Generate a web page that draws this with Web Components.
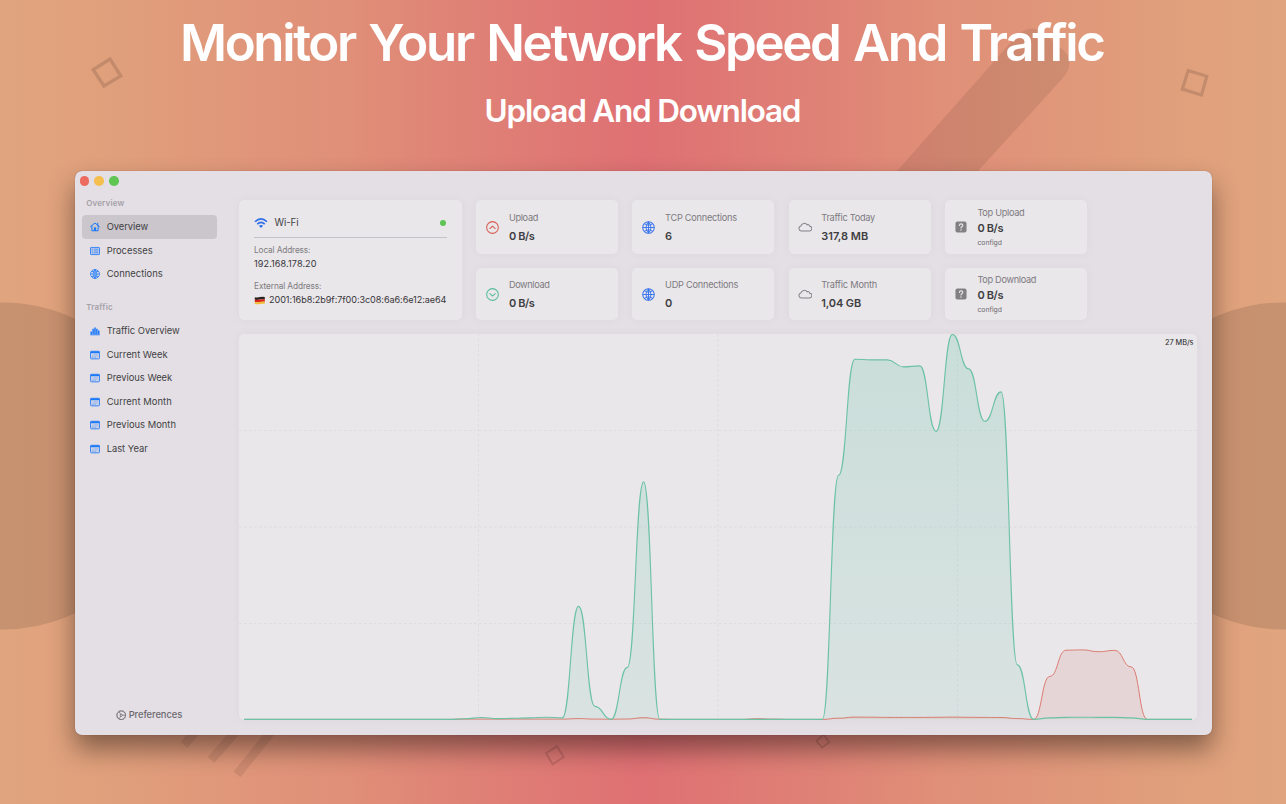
<!DOCTYPE html>
<html lang="en">
<head>
<meta charset="utf-8">
<title>Monitor Your Network Speed And Traffic</title>
<style>
  html, body {
    margin: 0;
    width: 1286px;
    height: 804px;
    overflow: hidden;
    font-family: Inter, "Liberation Sans", sans-serif;
  }
</style>
</head>
<body>
<promo-page>
  <fit-text slot="title" width="926">Monitor Your Network Speed And Traffic</fit-text>
  <fit-text slot="subtitle" width="317">Upload And Download</fit-text>
  <app-window>
    <side-bar slot="sidebar">
      <side-group label="Overview" width="38">
        <side-item icon="house" label="Overview" width="41.5" selected></side-item>
        <side-item icon="list" label="Processes" width="46"></side-item>
        <side-item icon="globe" label="Connections" width="56"></side-item>
      </side-group>
      <side-group label="Traffic" width="26.5">
        <side-item icon="bars" label="Traffic Overview" width="73"></side-item>
        <side-item icon="calendar" label="Current Week" width="61"></side-item>
        <side-item icon="calendar" label="Previous Week" width="65.5"></side-item>
        <side-item icon="calendar" label="Current Month" width="65"></side-item>
        <side-item icon="calendar" label="Previous Month" width="69.3"></side-item>
        <side-item icon="calendar" label="Last Year" width="41"></side-item>
      </side-group>
    </side-bar>
    <wifi-card></wifi-card>
    <stat-card icon="up" label="Upload" lw="29.5" value="0 B/s" vw="26"></stat-card>
    <stat-card icon="globe" label="TCP Connections" lw="72" value="6" vw="7"></stat-card>
    <stat-card icon="cloud" label="Traffic Today" lw="54" value="317,8 MB" vw="47"></stat-card>
    <stat-card icon="unknown" label="Top Upload" lw="47.3" value="0 B/s" vw="26" note="configd"></stat-card>
    <stat-card icon="down" label="Download" lw="41" value="0 B/s" vw="26"></stat-card>
    <stat-card icon="globe" label="UDP Connections" lw="73.3" value="0" vw="7"></stat-card>
    <stat-card icon="cloud" label="Traffic Month" lw="56" value="1,04 GB" vw="40"></stat-card>
    <stat-card icon="unknown" label="Top Download" lw="59" value="0 B/s" vw="26" note="configd"></stat-card>
    <traffic-chart slot="chart"></traffic-chart>
  </app-window>
</promo-page>

<script>
const icons = {
  house: `<path d="M1 7.3 8 1.6l7 5.7M3 6.6V14h10V6.6M12.3 2v3" fill="none" stroke="currentColor" stroke-width="1.6" stroke-linejoin="round" stroke-linecap="round"/><path d="M6.2 14V8.6h3.6V14z" fill="currentColor"/>`,
  list: `<rect x=".8" y="2.3" width="14.4" height="11.4" rx="1" fill="currentColor" fill-opacity=".22" stroke="currentColor" stroke-width="1.3"/><path d="M3 5.2h2M3 8h2M3 10.8h2M6.4 5.2h6.6M6.4 8h6.6M6.4 10.8h6.6" stroke="currentColor" stroke-width="1.2" opacity=".75"/>`,
  globe: `<circle cx="8" cy="8" r="7.1" fill="none" stroke="currentColor" stroke-width="1.3"/><path d="M8 1v14M1 8h14M2.8 3.5Q8 7 13.2 3.5M2.8 12.5Q8 9 13.2 12.5M8 1Q1.8 8 8 15M8 1q6.2 7 0 14" fill="none" stroke="currentColor" stroke-width="1.2"/>`,
  bars: `<path d="M.8 8.6h2.4V13H.8zM3.8 4.3h2.400V13H3.800zM6.800 2.500h2.400V13H6.800zM9.800 4.500h2.400V13H9.800zM12.800 7h2.400v6h-2.400zM.3 13.400h15.400v1.500H.3z" fill="currentColor"/>`,
  calendar: `<rect x=".8" y="2" width="14.4" height="12.2" rx="1.6" fill="currentColor" fill-opacity=".12" stroke="currentColor" stroke-width="1.3"/><path d="M.8 2.200h14.400v2.900H.8z" fill="currentColor"/><path d="M6 7.600h7.200M3 9.900h10.200M3 12.100h7.200" stroke="currentColor" stroke-width="1.100" stroke-dasharray="1.700 .7" opacity=".5"/>`,
  wifi: `<path d="M1.200 6.600Q8-.1 14.800 6.600M3.700 9.200q4.300-4.100 8.600 0" fill="none" stroke="currentColor" stroke-width="1.900"/><path d="M5.600 11.200q2.400-2.100 4.800 0L8 13.700z" fill="currentColor"/>`,
  up: `<circle cx="8" cy="8" r="7.200" fill="none" stroke="currentColor" stroke-width="1.300"/><path d="M4.700 9.300 8 6.300l3.300 3" fill="none" stroke="currentColor" stroke-width="1.300" stroke-linecap="round" stroke-linejoin="round"/>`,
  down: `<circle cx="8" cy="8" r="7.200" fill="none" stroke="currentColor" stroke-width="1.300"/><path d="M4.700 6.900 8 9.900l3.300-3" fill="none" stroke="currentColor" stroke-width="1.300" stroke-linecap="round" stroke-linejoin="round"/>`,
  cloud: `<path d="M3.500 12.500h9.500a2.700 2.700 0 0 0 .3-5.400 1.800 1.800 0 0 0-2.800-1.500A4 4 0 0 0 3.300 6.800 2.900 2.900 0 0 0 3.500 12.500z" fill="none" stroke="currentColor" stroke-width="1.150" stroke-linejoin="round"/>`,
  unknown: `<rect x=".6" y=".6" width="14.800" height="14.800" rx="2.600" fill="currentColor"/><path d="M5.900 6q0-2.200 2.200-2.200T10.300 5.900q0 1-1.200 1.700T8 9.400" fill="none" stroke="#e9e7ea" stroke-width="1.500" stroke-linecap="round"/><circle cx="8" cy="11.900" r="1" fill="#e9e7ea"/>`,
  gear: `<circle cx="8" cy="8" r="6.500" fill="none" stroke="currentColor" stroke-width="1.400"/><path d="M8 8h6.500M8 8 4.700 2.600M8 8l-3.300 5.400" stroke="currentColor" stroke-width="1.100"/><circle cx="8" cy="8" r="1.700" fill="#e5e0e6" stroke="currentColor" stroke-width="1.200"/><circle cx="8" cy="8" r="7.300" fill="none" stroke="currentColor" stroke-width=".8" stroke-dasharray="1.200 1.100"/>`
};

class SvgIcon extends HTMLElement {
  connectedCallback() {
    this.attachShadow({mode: "open"});
    this.shadowRoot.innerHTML = `
      <style>
        :host { display: block; flex: none; width: 10px; height: 10px; }
        svg { display: block; width: 100%; height: 100%; }
      </style>
      <svg viewBox="0 0 16 16">${icons[this.getAttribute("name")]}</svg>
    `;
  }
}

// One line of text, tracked so that it fills the given width
class FitText extends HTMLElement {
  connectedCallback() {
    if(!this.shadowRoot) {
      this.attachShadow({mode: "open"});
      this.shadowRoot.innerHTML = `
        <style>
          :host { display: block; white-space: nowrap; }
          span { display: inline-block; }
        </style>
        <span><slot></slot></span>
      `;
    }
    const span = this.shadowRoot.querySelector("span");
    const width = parseFloat(this.getAttribute("width"));
    const count = this.textContent.length;
    if(width && count > 1) {
      const spacing = (width - span.getBoundingClientRect().width) / (count - 1);
      span.style.letterSpacing = spacing + "px";
      span.style.marginRight = -spacing + "px";
    }
  }
}

class PromoPage extends HTMLElement {
  connectedCallback() {
    this.attachShadow({mode: "open"});
    this.shadowRoot.innerHTML = `
      <style>
        :host {
          display: flex;
          flex-direction: column;
          align-items: center;
          position: relative;
          width: 1286px;
          height: 804px;
          color: #fff;
          background: linear-gradient(90deg, #e0a57e 0, #e0a07c 8%, #e08f78 27%, #df8276 36%, #df7073 50%, #df8276 64%, #e08f78 73%, #e0a07c 92%, #e0a57e 100%);
        }
        .art { position: absolute; inset: 0; }
        header, .body { position: relative; }
        header { height: 171px; text-align: center; }
        h1, h2 { margin: 0; }
        h1 { font-size: 51px; line-height: 60px; font-weight: 600; padding-top: 13px; word-spacing: 3px; }
        h2 { font-size: 31.500px; line-height: 40px; font-weight: 600; padding-top: 18px; }
      </style>
      <svg class="art" width="1286" height="804" viewBox="0 0 1286 804">
        <circle cx="4" cy="466" r="163.500" opacity=".11"/>
        <circle cx="1282" cy="466" r="163.500" opacity=".11"/>
        <path d="M897 171 1012 41Q1030 19 1047 36L1062 49Q1077 62 1062 79L978 171z" opacity=".08"/>
        <g fill="none" stroke="#000">
          <path d="M184 745l14-16M211 760l28-32M237 774.500l36-45" stroke-width="9" opacity=".08"/>
          <path d="M93.200 69.700 110 59l10.800 17L104 86z" stroke-width="3.400" opacity=".13"/>
          <path d="M1188.200 70.500l18.600 5.800-5.300 18.800-19.200-6z" stroke-width="3.200" opacity=".13"/>
          <path d="M546 753.100l11-6.700 6.700 10.600-11 7.300z" stroke-width="2" opacity=".13"/>
          <path d="M816.500 741l7.200-6.300 5.500 7.500-7.200 5.400z" stroke-width="1.700" opacity=".14"/>
        </g>
      </svg>
      <header>
        <h1><slot name="title"></slot></h1>
        <h2><slot name="subtitle"></slot></h2>
      </header>
      <div class="body"><slot></slot></div>
    `;
  }
}

class AppWindow extends HTMLElement {
  connectedCallback() {
    this.attachShadow({mode: "open"});
    this.shadowRoot.innerHTML = `
      <style>
        :host {
          display: flex;
          width: 1137px;
          height: 564px;
          border-radius: 7px;
          background: #e4dfe5;
          color: #434145;
          box-shadow: 0 0 1px rgb(60 20 20 / 50%), 0 14px 26px rgb(0 0 0 / 42%);
        }
        aside { width: 164.500px; display: flex; flex-direction: column; }
        .lights { display: flex; gap: 5.200px; padding: 5.200px 0 0 5.200px; height: 17px; }
        .lights i { width: 9.600px; height: 9.600px; border-radius: 50%; }
        main { padding-top: 29px; width: 958px; }
        .cards {
          display: grid;
          grid-template-columns: 223px 142px 142px 142px 142px;
          grid-template-rows: 54px 52px;
          gap: 14px 14.200px;
          margin-bottom: 14.200px;
        }
      </style>
      <aside>
        <div class="lights">
          <i style="background: #ec6a5e"></i>
          <i style="background: #f4bf4f"></i>
          <i style="background: #61c554"></i>
        </div>
        <slot name="sidebar"></slot>
      </aside>
      <main>
        <div class="cards"><slot></slot></div>
        <slot name="chart"></slot>
      </main>
    `;
  }
}

class SideBar extends HTMLElement {
  connectedCallback() {
    this.attachShadow({mode: "open"});
    this.shadowRoot.innerHTML = `
      <style>
        :host { flex: 1; display: flex; flex-direction: column; }
        .prefs {
          display: flex;
          align-items: center;
          gap: 2.500px;
          margin-top: auto;
          padding: 0 0 13px 41.200px;
          font-size: 9.400px;
          line-height: 14px;
          font-weight: 500;
          color: #6b686d;
        }
        .prefs svg-icon { width: 10.500px; height: 10.500px; }
      </style>
      <slot></slot>
      <div class="prefs">
        <svg-icon name="gear"></svg-icon>
        <fit-text width="53.500">Preferences</fit-text>
      </div>
    `;
  }
}

class SideGroup extends HTMLElement {
  connectedCallback() {
    this.attachShadow({mode: "open"});
    this.shadowRoot.innerHTML = `
      <style>
        :host { display: block; margin-bottom: 10.800px; }
        .label {
          padding: 4px 0 6.200px 11.700px;
          font-size: 8px;
          line-height: 12px;
          font-weight: 600;
          color: #a5a1a7;
        }
      </style>
      <div class="label"><fit-text width="${this.getAttribute("width")}">${this.getAttribute("label")}</fit-text></div>
      <slot></slot>
    `;
  }
}

class SideItem extends HTMLElement {
  connectedCallback() {
    this.attachShadow({mode: "open"});
    this.shadowRoot.innerHTML = `
      <style>
        :host {
          display: flex;
          align-items: center;
          gap: 7px;
          box-sizing: border-box;
          width: 135.500px;
          height: 23.600px;
          margin-left: 7.200px;
          padding-left: 8px;
          border-radius: 4px;
          font-size: 9.400px;
          line-height: 14px;
          color: #413f43;
        }
        :host([selected]) { background: #cbc6cc; }
        svg-icon { color: #1a78fa; }
      </style>
      <svg-icon name="${this.getAttribute("icon")}"></svg-icon>
      <fit-text width="${this.getAttribute("width")}">${this.getAttribute("label")}</fit-text>
    `;
  }
}

const cardStyle = `
  border-radius: 5px;
  background: #e9e7ea;
  box-shadow: 0 0 9px rgb(120 90 120 / 6%);
`;

class WifiCard extends HTMLElement {
  connectedCallback() {
    this.attachShadow({mode: "open"});
    this.shadowRoot.innerHTML = `
      <style>
        :host {
          display: block;
          grid-row: 1 / 3;
          box-sizing: border-box;
          padding: 14.500px 15px 0;
          font-size: 9.100px;
          line-height: 12px;
          ${cardStyle}
        }
        .head {
          display: flex;
          align-items: center;
          gap: 6.500px;
          height: 16px;
          padding-bottom: 6px;
          border-bottom: 1px solid #c6c3c8;
          font-size: 9.700px;
        }
        .head svg-icon { width: 14px; height: 14px; color: #2f6fe8; }
        .dot { width: 6px; height: 6px; margin: 0 1.500px 0 auto; border-radius: 50%; background: #5ec454; }
        .label { font-size: 8.300px; color: #7f7c81; padding-top: 6px; }
        .value { display: flex; align-items: center; padding-top: 2px; margin-bottom: 4.500px; color: #38363a; }
        .flag { width: 11px; height: 9px; margin-right: 4px; }
      </style>
      <div class="head">
        <svg-icon name="wifi"></svg-icon>
        <fit-text width="24">Wi-Fi</fit-text>
        <div class="dot"></div>
      </div>
      <div class="label"><fit-text width="56.500">Local Address:</fit-text></div>
      <div class="value"><fit-text width="62.500">192.168.178.20</fit-text></div>
      <div class="label"><fit-text width="67.500">External Address:</fit-text></div>
      <div class="value">
        <svg class="flag" viewBox="0 0 11 9">
          <path d="M.8 1.200q2.700.5 5-.1t5-.2V3.400q-2.500-.4-5 .2t-5 .1z" fill="#2a2422"/>
          <path d="M.8 3.600q2.700.5 5-.1t5-.2V5.800q-2.500-.4-5 .2t-5 .1z" fill="#d8261c"/>
          <path d="M.8 6q2.700.5 5-.1t5-.2V7.800q-2.500-.4-5 .2t-5 .1z" fill="#f3bd35"/>
        </svg>
        <fit-text width="177.500">2001:16b8:2b9f:7f00:3c08:6a6:6e12:ae64</fit-text>
      </div>
    `;
  }
}

const iconColors = { up: "#d95c50", down: "#56bd98", globe: "#3c76ec", cloud: "#858287", unknown: "#838084" };
const iconSizes = { up: 13, down: 13, globe: 13, cloud: 14, unknown: 12 };

class StatCard extends HTMLElement {
  connectedCallback() {
    const icon = this.getAttribute("icon");
    const note = this.getAttribute("note");
    const size = iconSizes[icon];
    this.attachShadow({mode: "open"});
    this.shadowRoot.innerHTML = `
      <style>
        :host {
          display: flex;
          align-items: center;
          gap: 10px;
          box-sizing: border-box;
          padding-left: 9.700px;
          ${cardStyle}
        }
        svg-icon {
          width: ${size}px;
          height: ${size}px;
          margin: 0 ${(13 - size) / 2}px;
          color: ${iconColors[icon]};
        }
        .label { font-size: 9.200px; line-height: 12px; color: #7d7a7f; margin-top: ${note ? 0 : .5}px; }
        .value { font-size: 11px; line-height: 14px; font-weight: 600; color: #403e42; margin-top: ${note ? 2 : 5.500}px; }
        .note { font-size: 6.800px; line-height: 9px; color: #6d6a6f; margin-top: 2.500px; }
      </style>
      <svg-icon name="${icon}"></svg-icon>
      <div>
        <div class="label"><fit-text width="${this.getAttribute("lw")}">${this.getAttribute("label")}</fit-text></div>
        <div class="value"><fit-text width="${this.getAttribute("vw")}">${this.getAttribute("value")}</fit-text></div>
        ${note ? `<div class="note"><fit-text width="24.500">${note}</fit-text></div>` : ""}
      </div>
    `;
  }
}

// Heights above the baseline, one sample each 16.25px
const download = [
  0, .6, 1.9, .8, 1.1, 1.5, 2.2, 1.5, 113, 13, 0, 52, 237.5, 0,
  0, 0, 0, 0, 0, 0, 0, 0, 0, 0,
  244, 360.2, 359.5, 359.5, 352.5, 353.5, 288, 385, 350.5, 298, 327.5, 54.5, 0,
  1.5, 2, 2.2, 2, 2, 1.5, 0
];
const upload = [
  0, .3, .3, .3, .3, .3, .3, .3, .8, .3, .2, .4, 1.7, .2,
  0, 0, 0, 0, 0, .7, .3, 0, 0, 0,
  1.2, 2.3, 2.2, 2, 2, 2, 2.1, 2.3, 2.1, 2, 1.9, .8, 0,
  43, 69.2, 69.5, 67.7, 69, 52.5, 0
];

class TrafficChart extends HTMLElement {
  // The bends have horizontal tangents at each sample
  line(samples, base) {
    const step = 16.25;
    let x = 209.6;
    let y = base;
    let d = `M5 ${base}H${x}`;
    samples.slice(1).forEach((value) => {
      const mid = x + step / 2;
      const next = base - value;
      x += step;
      d += `C${mid} ${y} ${mid} ${next} ${x} ${next}`;
      y = next;
    });
    return d + `H953`;
  }

  connectedCallback() {
    const down = this.line(download, 385.4);
    const up = this.line(upload, 385.4);
    this.attachShadow({mode: "open"});
    this.shadowRoot.innerHTML = `
      <style>
        :host {
          display: grid;
          width: 958px;
          height: 385.800px;
          ${cardStyle}
        }
        svg, .max { grid-area: 1 / 1; }
        svg { display: block; }
        .max { justify-self: end; padding: 3.500px 3.500px 0 0; font-size: 7.400px; line-height: 9px; color: #222; height: 9px; }
      </style>
      <svg width="958" height="386" viewBox="0 0 958 386">
        <defs>
          <linearGradient id="g" gradientUnits="userSpaceOnUse" x1="0" y1="0" x2="0" y2="386">
            <stop stop-color="#4bb996" stop-opacity=".2"/>
            <stop offset="1" stop-color="#4bb996" stop-opacity=".1"/>
          </linearGradient>
        </defs>
        <path d="M0 96.500h958M0 193h958M0 289.500h958M239.500 0v386M479 0v386M718.500 0v386" fill="none" stroke="#aaa5ac" stroke-opacity=".2" stroke-width=".8" stroke-dasharray="2.500 2.500"/>
        <path d="${up}V385.400H5z" fill="#d9564a" fill-opacity=".12"/>
        <path d="${down}V385.400H5z" fill="url(#g)"/>
        <path d="${up}" fill="none" stroke="#d97064" stroke-width=".9"/>
        <path d="${down}" fill="none" stroke="#6cc2a4" stroke-width="1.100"/>
      </svg>
      <div class="max"><fit-text width="28.500">27 MB/s</fit-text></div>
    `;
  }
}

customElements.define("svg-icon", SvgIcon);
customElements.define("promo-page", PromoPage);
customElements.define("app-window", AppWindow);
customElements.define("side-bar", SideBar);
customElements.define("side-group", SideGroup);
customElements.define("side-item", SideItem);
customElements.define("wifi-card", WifiCard);
customElements.define("stat-card", StatCard);
customElements.define("traffic-chart", TrafficChart);
// Last, because it measures text that the other elements have styled
customElements.define("fit-text", FitText);
</script>
</body>
</html>
